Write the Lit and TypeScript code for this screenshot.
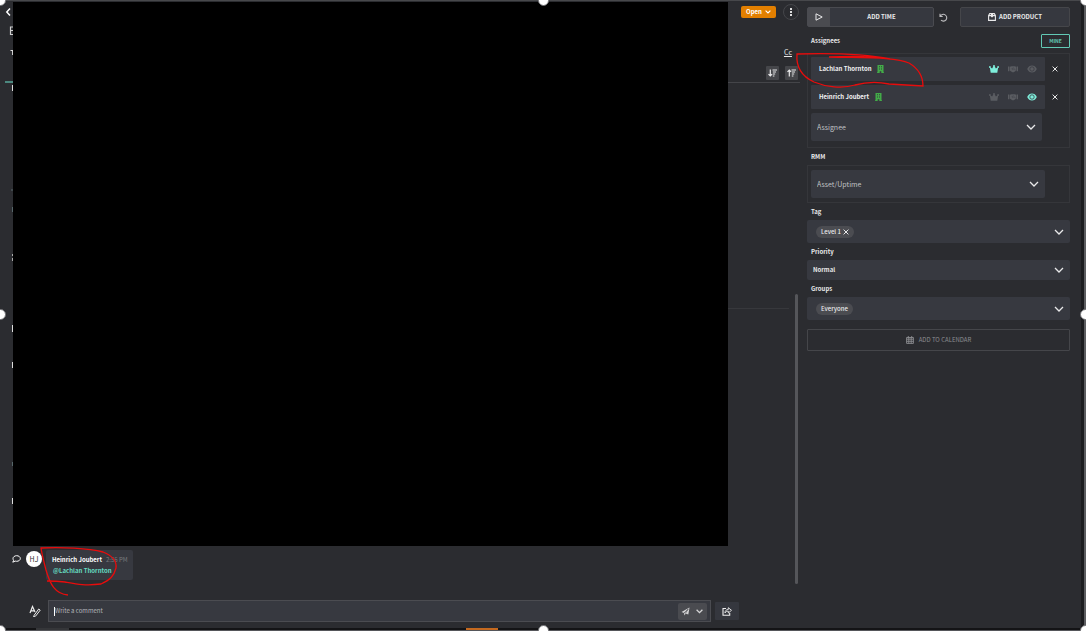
import { LitElement, html, css, svg } from "lit";
import { customElement, property, state } from "lit/decorators.js";
import { classMap } from "lit/directives/class-map.js";

const chevron = html`<svg class="chev" viewBox="0 0 10 6" width="10" height="6" aria-hidden="true">
  <path d="M1 1l4 4 4-4" fill="none" stroke="currentColor" stroke-width="1.3" /></svg>`;

const cross = html`<svg viewBox="0 0 6 6" width="6" height="6" aria-hidden="true">
  <path d="M.6.6l4.8 4.8M5.4.6L.6 5.4" fill="none" stroke="currentColor" stroke-width="1" /></svg>`;

const roleIcons: Record<string, unknown> = {
  Owner: svg`<path d="M.8 2l2.300 1.600L5 .3l1.900 3.300L9.200 2 8.300 7.800H1.700z" fill="currentColor"/><circle cx=".9" cy="2" r=".9" fill="currentColor"/><circle cx="5" cy=".9" r=".9" fill="currentColor"/><circle cx="9.100" cy="2" r=".9" fill="currentColor"/>`,
  Collaborator: svg`<path d="M0 1.600h1.300v4.600H0zM8.700 1.600H10v4.600H8.700z" fill="currentColor"/><path d="M1.700 1.800L3.600 1.200h3l1.700.6v3.800L5.800 7.300H4.400L1.700 5.600z" fill="currentColor"/><path d="M5.400 2.400L3.800 4l1 .5 1.200-.8 1.600 1.400" fill="none" stroke="#373940" stroke-width=".5"/>`,
  Watcher: svg`<path d="M.2 4C1.300 1.600 3 .5 5 .5S8.700 1.600 9.800 4C8.700 6.400 7 7.500 5 7.500S1.300 6.400.2 4z" fill="currentColor"/><circle cx="5" cy="4" r="2.200" fill="none" stroke="#373940" stroke-width=".8"/>`,
};

@customElement("assignee-row")
class AssigneeRow extends LitElement {
  @property() name = "";
  @property() role = "";
  static styles = css`
    :host { display: flex; align-items: center; }
    .card {
      display: flex; align-items: center; flex: 1; height: 24px; padding: 0 8px;
      background: #373940; border-radius: 1px;
    }
    .name { font-weight: 700; color: #f2f2f3; }
    .org { color: #43ab48; margin-left: 6px; }
    .roles { display: flex; gap: 9px; margin-left: auto; }
    button {
      display: flex; align-items: center; justify-content: center; padding: 0; border: 0;
      background: none; color: #5a5c61;
    }
    .on { color: #7eeedb; }
    .remove { width: 20px; height: 20px; color: #e8e8e8; }
  `;
  render() {
    return html`
      <div class="card">
        <span class="name">${this.name}</span>
        <svg class="org" viewBox="0 0 7 8" width="7" height="8" aria-hidden="true">
          <path fill="currentColor" fill-rule="evenodd" d="M.5 0h6v7.200H7V8H4.300V6.300H2.700V8H0v-.8h.5zM2 1.300v1h1v-1zm2 0v1h1v-1zM2 3.600v1h1v-1zm2 0v1h1v-1z" />
        </svg>
        <div class="roles">
          ${Object.keys(roleIcons).map(
            (r) => html`<button class=${classMap({ on: r === this.role })} aria-label=${r}>
              <svg viewBox="0 0 10 8" width="10" height="8">${roleIcons[r]}</svg>
            </button>`
          )}
        </div>
      </div>
      <button class="remove" aria-label="Remove ${this.name}">${cross}</button>
    `;
  }
}

@customElement("app-root")
class AppRoot extends LitElement {
  @state() private assignees = [
    { name: "Lachlan Thornton", role: "Owner" },
    { name: "Heinrich Joubert", role: "Watcher" },
  ];

  static styles = css`
    :host {
      display: block; position: relative; overflow: hidden;
      background: #2b2c30; color: #e9e9ea;
      font: 400 6px/10px "Noto Sans CJK SC", "Noto Sans", sans-serif;
    }
    * { box-sizing: border-box; }
    button, input, select { font: inherit; color: inherit; margin: 0; padding: 0; border: 0; background: none; }
    button { display: flex; align-items: center; justify-content: center; }
    svg { flex: none; display: block; }
    .frame { display: flex; flex-direction: column; min-height: 100vh; border-top: 1px solid #47484b; }
    .cols { display: grid; grid-template-columns: minmax(0, 1fr) 263px; column-gap: 7px; flex: 1; padding-right: 16px; }

    .main { display: flex; flex-direction: column; position: relative; }
    .upper { display: flex; flex: 1; padding-top: 1px; }
    .rail { width: 13px; overflow: hidden; }
    .redacted { flex: 1; background: #000; }
    .tools { width: 72px; display: flex; flex-direction: column; }
    .status { display: flex; align-items: center; justify-content: space-between; padding: 2px 1px 0 13px; }
    .open { gap: 3px; width: 35px; height: 12px; background: #e27f00; color: #fff; border-radius: 2px; font-weight: 700; }
    .kebab { width: 16px; height: 16px; border: 1px solid #45464a; border-radius: 50%; }
    .cc { align-self: flex-end; margin: 27px 8px 0 0; color: #e9e9ea; font-size: 7px; text-underline-offset: 1px; }
    .sorts { display: flex; justify-content: flex-end; gap: 6px; padding: 9px 2px 2px 0; border-bottom: 1px solid #444549; }
    .sorts button { width: 13px; height: 14px; background: #45464a; border-radius: 1px; }
    .rule { margin: 225px 11px 0 0; border-top: 1px solid #37383c; }
    .scroll { position: absolute; right: 2px; top: 293px; bottom: 44px; width: 3px; border-radius: 2px; background: #55565a; }

    .message { display: flex; align-items: flex-start; padding: 4px 12px 0; }
    .message .bubbleicon { margin-top: 5px; }
    .avatar { width: 16px; height: 16px; margin: 1px 4px 0 5px; border-radius: 50%; background: #fff; color: #333; text-align: center; font-size: 7px; line-height: 16px; }
    .bubble { background: #373940; border-radius: 2px; padding: 4px 5px 4px 6px; height: 30px; line-height: 11px; }
    .bubble b { font-weight: 700; color: #fff; }
    .bubble time { color: #77797e; margin-left: 4px; }
    .mention { color: #67dcc2; text-decoration: none; font-weight: 700; margin-left: 1px; }

    .composer { display: flex; align-items: center; padding: 20px 61px 6px 29px; }
    .format { width: 12px; height: 12px; margin-right: 7px; }
    .box { display: flex; align-items: center; flex: 1; height: 22px; background: #373940; border: 1px solid #4b4c51; padding: 0 3px 0 5px; }
    .caret { width: 1px; height: 9px; background: #fff; }
    .box input { flex: 1; min-width: 0; outline: 0; }
    .box input::placeholder { color: #b4b6ba; opacity: 1; }
    .send { display: flex; width: 29px; height: 17px; background: #4a4b50; border-radius: 2px; color: #d5d5d6; }
    .send button { flex: 1; }
    .share { width: 24px; height: 18px; margin-left: 4px; background: #35373e; border-radius: 1px; }

    aside { padding-top: 6px; }
    .actions { display: flex; align-items: center; font-weight: 700; }
    .time { display: flex; flex: 1; height: 20px; border: 1px solid #4a4b50; border-radius: 2px; background: #36383f; }
    .play { width: 22px; background: #4a4b50; }
    .addtime { flex: 1; }
    .undo { width: 26px; height: 20px; padding-right: 7px; color: #bdbdbf; }
    .product { width: 110px; height: 20px; gap: 3px; border: 1px solid #45464a; border-radius: 2px; background: #36383f; }
    .heading { display: flex; align-items: center; justify-content: space-between; height: 26px; padding: 2px 0 0 4px; }
    .heading h2, .label { margin: 0; font-size: 6px; font-weight: 700; line-height: 10px; }
    .mine { width: 29px; height: 14px; border: 1px solid #62c9b5; border-radius: 1px; color: #62c9b5; font-size: 5px; font-weight: 700; }
    .group { border: 1px solid #35363a; padding: 4px 4px 4px 3px; }
    .people { display: flex; flex-direction: column; gap: 4px; padding-top: 3px; padding-bottom: 6px; }
    .label { display: block; padding: 4px 0 3px 4px; }
    .field { position: relative; display: flex; align-items: center; background: #373940; border-radius: 2px; }
    .field .chev { position: absolute; right: 6px; pointer-events: none; }
    .field select { appearance: none; width: 100%; height: 20px; padding: 0 20px 0 6px; outline: 0; font-weight: 700; }
    .field.tall { margin-right: 23px; }
    .field.tall select { height: 28px; color: #c0c1c4; font-weight: 400; font-size: 7px; }
    .field.uptime { margin-right: 20px; }
    .chips { height: 23px; padding-left: 9px; }
    .chip { display: flex; align-items: center; gap: 2px; height: 12px; padding: 0 5px; border-radius: 6px; background: #4b4c51; font-weight: 500; }
    .expand { position: absolute; inset: 0 0 0 auto; width: 20px; }
    .calendar { width: 100%; height: 22px; margin-top: 9px; gap: 5px; border: 1px solid #45464a; border-radius: 1px; color: #8c8d91; }

    .edge { display: flex; height: 3px; background: #141416; border-bottom: 1px solid #55565a; }
    .tab { width: 33px; margin-left: 36px; background: #353639; }
    .accent { width: 32px; margin-left: 397px; background: #c4691f; }
    .side { position: absolute; right: 0; top: 0; bottom: 0; width: 5px; background: #1c1d20; border-right: 2px solid #5c5d60; }
    .overlay { position: absolute; inset: 0 1px 3px 0; pointer-events: none; }
    .handle { position: absolute; width: 11px; height: 11px; margin: -5px; border-radius: 50%; background: #fff; border: 1px solid #707174; }
    .t { top: 0; } .m { top: 50%; } .b { top: 100%; margin-top: -3px; }
    .l { left: 0; } .c { left: 50%; } .r { left: 100%; }
    .pen { position: absolute; pointer-events: none; }
    .penright { right: 0; top: 45px; }
    .penbottom { left: 0; bottom: 0; }
  `;

  private sortIcon(up: boolean) {
    return html`<svg viewBox="0 0 9 8" width="9" height="8">
      <path d=${up ? "M2.300 7.500V1M.5 2.800L2.300 1l1.800 1.800" : "M2.300.5V7M.5 5.200L2.300 7l1.800-1.800"} fill="none" stroke="currentColor" stroke-width="1.200" />
      <path d="M4.500 1H9M4.800 3H8M4.800 5H7.200M4.800 7H6.400" stroke="currentColor" stroke-width="1" /></svg>`;
  }

  render() {
    return html`
      <div class="frame">
        <div class="cols">
          <main class="main">
            <div class="upper">
              <div class="rail">
                <svg viewBox="0 0 13 544" width="13" height="544" aria-hidden="true">
                  <path d="M10 6.500L6.800 10l3.200 3.500" fill="none" stroke="#fff" stroke-width="1.500" />
                  <path d="M13 25h-2.500v7.500H13M10.500 28.500H13" fill="none" stroke="#d0d0d0" stroke-width="1.200" />
                  <path d="M10.500 48.500H13M12.700 48v5" fill="none" stroke="#ddd" stroke-width="1.200" />
                  <path d="M5 80H13" stroke="#58a89b" stroke-width="1.500" />
                  <path d="M12.500 83v6M12.500 323v7M12.500 360v6M12.500 496v6" stroke="#ddd" />
                  <path d="M11 188h2M12.500 205v5M12.500 460v4" stroke="#56666a" />
                  <path d="M12.500 252v2M12.500 256v3" stroke="#aaa" />
                </svg>
              </div>
              <div class="redacted"></div>
              <div class="tools">
                <div class="status">
                  <button class="open">Open
                    <svg viewBox="0 0 6 4" width="6" height="4"><path d="M.6.6L3 3 5.400.6" fill="none" stroke="currentColor" stroke-width="1.100" /></svg>
                  </button>
                  <button class="kebab" aria-label="More">
                    <svg viewBox="0 0 2 8" width="2" height="8"><path d="M0 0h2v2H0zM0 3h2v2H0zM0 6h2v2H0z" fill="#ddd" /></svg>
                  </button>
                </div>
                <a class="cc" href="#cc">Cc</a>
                <div class="sorts">
                  <button aria-label="Sort descending">${this.sortIcon(false)}</button>
                  <button aria-label="Sort ascending">${this.sortIcon(true)}</button>
                </div>
                <div class="rule"></div>
              </div>
            </div>
            <div class="message">
              <svg class="bubbleicon" viewBox="0 0 9 8" width="9" height="8" aria-hidden="true">
                <path d="M4.700.7c2 0 3.600 1.200 3.600 2.800S6.700 6.300 4.700 6.300c-.6 0-1-.1-1.500-.2L.8 7.200l.8-1.900C1.200 4.800 1 4.200 1 3.500 1 1.900 2.700.7 4.700.7z" fill="none" stroke="#fff" />
              </svg>
              <span class="avatar">HJ</span>
              <div class="bubble">
                <div><b>Heinrich Joubert</b><time>2:56 PM</time></div>
                <a class="mention" href="#mention">@Lachlan Thornton</a>
              </div>
            </div>
            <div class="composer">
              <button class="format" aria-label="Formatting">
                <svg viewBox="0 0 12 12" width="12" height="12">
                  <path d="M1 8L3.500 1.500 6 7M1.800 5.800H5" fill="none" stroke="#eee" stroke-width="1.200" />
                  <path d="M5 10.500L9.700 4l1.500 1.200-4.700 6-2 .3z" fill="none" stroke="#eee" />
                </svg>
              </button>
              <div class="box">
                <span class="caret"></span>
                <input aria-label="Write a comment" placeholder="Write a comment" />
                <div class="send">
                  <button aria-label="Send">
                    <svg viewBox="0 0 9 9" width="9" height="9"><path d="M.5 5L8.500.5 7.300 7.500 4.700 6.500 3.400 8.500 3 6z" fill="currentColor" /><path d="M3 6L7.300 2 4.300 6.400" fill="none" stroke="#4a4b50" stroke-width=".7" /></svg>
                  </button>
                  <button aria-label="Send options">
                    <svg viewBox="0 0 7 5" width="7" height="5"><path d="M.6.800L3.500 3.700 6.400.8" fill="none" stroke="currentColor" stroke-width="1.300" /></svg>
                  </button>
                </div>
              </div>
              <button class="share" aria-label="Share">
                <svg viewBox="0 0 10 9" width="10" height="9"><path d="M4 1.500H1v6.700h6.700V6" fill="none" stroke="#eee" stroke-width="1.100" /><path d="M3 6c0-2.500 1.400-3.500 3.300-3.500V.7L9.500 3.300 6.300 6V4.200C4.700 4.200 3.700 4.700 3 6z" fill="none" stroke="#eee" stroke-width=".9" /></svg>
              </button>
            </div>
            <div class="scroll"></div>
          </main>

          <aside>
            <div class="actions">
              <div class="time">
                <button class="play" aria-label="Start timer">
                  <svg viewBox="0 0 8 8" width="8" height="8"><path d="M1 .8L7.200 4 1 7.200z" fill="none" stroke="currentColor" /></svg>
                </button>
                <button class="addtime">ADD TIME</button>
              </div>
              <button class="undo" aria-label="Reset timer">
                <svg viewBox="0 0 9 9" width="9" height="9"><path d="M1 .8v2.700h2.700M1.300 3.200A3.400 3.400 0 1 1 2 7.200" fill="none" stroke="currentColor" stroke-width="1.100" /></svg>
              </button>
              <button class="product">
                <svg viewBox="0 0 8 8" width="8" height="8"><path d="M.6 2.500L1.700.6h4.600l1.100 1.900v4.900H.6zM.6 2.600h6.800" fill="none" stroke="currentColor" stroke-width="1.100" /><path d="M3 .5h2v4l-1-.7-1 .7z" fill="currentColor" /></svg>
                ADD PRODUCT
              </button>
            </div>
            <div class="heading"><h2>Assignees</h2><button class="mine">MINE</button></div>
            <div class="group people">
              ${this.assignees.map((a) => html`<assignee-row .name=${a.name} .role=${a.role}></assignee-row>`)}
              <div class="field tall">
                <select aria-label="Assignee"><option>Assignee</option></select>${chevron}
              </div>
            </div>
            <label class="label" for="asset">RMM</label>
            <div class="group">
              <div class="field tall uptime">
                <select id="asset"><option>Asset/Uptime</option></select>${chevron}
              </div>
            </div>
            <label class="label" for="tag">Tag</label>
            <div class="field chips">
              <span class="chip">Level 1 <button aria-label="Remove Level 1">${cross}</button></span>
              <button class="expand" id="tag" aria-label="Show tags"></button>${chevron}
            </div>
            <label class="label" for="priority">Priority</label>
            <div class="field"><select id="priority"><option>Normal</option></select>${chevron}</div>
            <label class="label" for="groups">Groups</label>
            <div class="field chips">
              <span class="chip">Everyone</span>
              <button class="expand" id="groups" aria-label="Show groups"></button>${chevron}
            </div>
            <button class="calendar">
              <svg viewBox="0 0 8 8" width="8" height="8"><path d="M.6 1.500h6.800v5.900H.6zM.6 3.200h6.800M.6 5.300h6.800M2.800 1.500v6M5.200 1.500v6M2.300 0v2M5.700 0v2" fill="none" stroke="currentColor" stroke-width=".9" /></svg>
              ADD TO CALENDAR
            </button>
          </aside>
        </div>
        <div class="edge"><span class="tab"></span><span class="accent"></span></div>
      </div>

      <div class="side"></div>
      <svg class="pen penright" viewBox="790 45 296 50" width="296" height="50" aria-hidden="true">
        <path d="M890 59C872 56 850 56 829 57M890 59C865 54 830 53 797 54C796 66 801 76 814 82C826 87 842 89 855 85C866 82 875 81 889 84L923 86C923 78 919 69 909 63C896 57 865 58 829 57" fill="none" stroke="#e80c0c" stroke-width="1.300" />
      </svg>
      <svg class="pen penbottom" viewBox="0 541 200 90" width="200" height="90" aria-hidden="true">
        <path d="M68 595C55 594 50 584 46 570C44 562 42 555 41 548C61 547 88 548 103 552C113 556 117 561 116 568C114 576 110 580 101 584C85 586 76 584 65 582Q57 581 47 581" fill="none" stroke="#e80c0c" stroke-width="1.300" />
      </svg>
      <div class="overlay">
        ${["t l", "t c", "t r", "m l", "m r", "b l", "b c", "b r"].map((p) => html`<span class="handle ${p}"></span>`)}
      </div>
    `;
  }
}
